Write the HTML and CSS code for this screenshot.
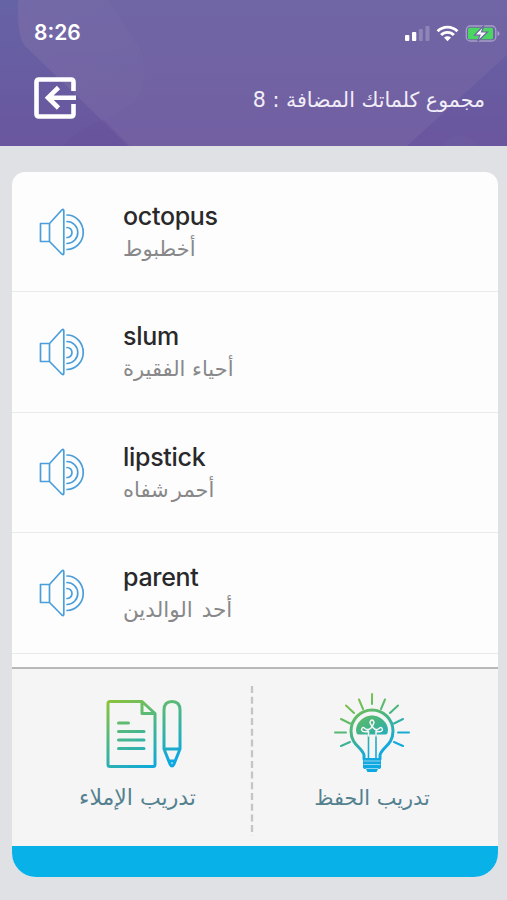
FILE: index.html
```html
<!DOCTYPE html>
<html lang="ar">
<head>
<meta charset="utf-8">
<title>كلماتك المضافة</title>
<link rel="stylesheet" href="styles.css">
</head>
<body>
<svg class="defs" width="0" height="0">
  <symbol id="speaker" viewBox="0 0 46 50">
    <path d="M1.500 16.500H10.500V34.500H1.500ZM10.500 16.500 22.800 3Q24.800 1.500 24.800 4V46Q24.800 48.500 22.800 47L10.500 34.500M28 8A16 17 0 0 1 28 42.500M28 14.500A10.300 10.500 0 0 1 28 36.500M28 20.500A4.700 4.700 0 0 1 28 30.500" fill="none" stroke="#4a9eda" stroke-width="1.700" stroke-linecap="round" stroke-linejoin="round"/>
  </symbol>
</svg>
<main class="screen">
  <header class="header">
    <svg class="backdrop" width="507" height="146" viewBox="0 0 507 146">
      <defs><linearGradient id="lift" x1="0" y1="0" x2="1" y2="1"><stop stop-color="#fff" stop-opacity=".03"/><stop offset="1" stop-color="#fff" stop-opacity=".01"/></linearGradient></defs>
      <path d="M18 0H507V55L407 146H128L24 45Q17 35 18 0Z" fill="#7868a5" opacity=".55"/>
      <path d="M18 0H108L140 49Q152 84 133 103L104 121L24 45Q17 35 18 0Z" fill="url(#lift)"/>
      <path d="M62 146Q78 128 104 120L130 146Z" fill="#63519a" opacity=".35"/>
      <path d="M441 146Q460 124 480 146Z" fill="#7565a5" opacity=".25"/>
    </svg>
    <div class="status">
      <time class="clock">8:26</time>
      <svg class="status-icons" width="96" height="20" viewBox="0 0 96 20">
        <g fill="#fff"><rect x="0" y="12" width="4.300" height="6" rx="1"/><rect x="7" y="9" width="4.300" height="9" rx="1"/><rect x="13.800" y="6" width="4" height="12" rx="1" opacity=".22"/><rect x="20.500" y="3" width="4" height="15" rx="1" opacity=".22"/></g>
        <g fill="none" stroke="#fff" stroke-width="2.900"><path d="M32.600 8.200A14 14 0 0 1 52.400 8.200"/><path d="M36.100 12A9 9 0 0 1 48.900 12"/></g>
        <path d="M39 14.600Q42.500 11.900 46 14.600L42.500 18.200Z" fill="#fff"/>
        <rect x="61.300" y="3" width="29.500" height="15" rx="4" fill="none" stroke="#a5a0c9" stroke-width="1.300"/>
        <path d="M92.500 8V13Q94.500 12.500 94.500 10.500Q94.500 8.500 92.500 8Z" fill="#a5a0c9"/>
        <rect x="63" y="4.700" width="25" height="11.600" rx="1.500" fill="#4bd662"/>
        <path d="M79 2.500 69.500 12.200H75L72.500 18.500 82.500 9H76.500Z" fill="#fff" stroke="#6e65a6" stroke-width="1.200"/>
      </svg>
    </div>
    <div class="title-bar">
      <svg class="exit" width="42" height="42" viewBox="0 0 42 42" fill="none" stroke="#fff" stroke-width="4.600">
        <path d="M39.500 14V5Q39.500 2.500 37 2.500H5Q2.500 2.500 2.500 5V37Q2.500 39.500 5 39.500H37Q39.500 39.500 39.500 37V27"/>
        <path d="M42 20.700H14M24.500 10.500 14 20.700 24.500 31"/>
      </svg>
      <h1 class="title" dir="rtl">مجموع كلماتك المضافة : 8</h1>
    </div>
  </header>
  <section class="card">
    <ul class="words">
      <li class="word"><svg class="speaker"><use href="#speaker"/></svg><div class="entry"><b class="term">octopus</b><span class="meaning" dir="rtl">أخطبوط</span></div></li>
      <li class="word"><svg class="speaker"><use href="#speaker"/></svg><div class="entry"><b class="term">slum</b><span class="meaning" dir="rtl">أحياء الفقيرة</span></div></li>
      <li class="word"><svg class="speaker"><use href="#speaker"/></svg><div class="entry"><b class="term">lipstick</b><span class="meaning tight" dir="rtl">أحمر شفاه</span></div></li>
      <li class="word"><svg class="speaker"><use href="#speaker"/></svg><div class="entry"><b class="term">parent</b><span class="meaning loose" dir="rtl">أحد الوالدين</span></div></li>
    </ul>
    <nav class="training">
      <a class="mode">
        <svg width="78" height="72" viewBox="0 0 78 72" fill="none" stroke="url(#paper)" stroke-width="3" stroke-linecap="round" stroke-linejoin="round">
          <defs><linearGradient id="paper" gradientUnits="userSpaceOnUse" x1="10" y1="0" x2="45" y2="72"><stop stop-color="#8ac33e"/><stop offset=".5" stop-color="#46b68f"/><stop offset="1" stop-color="#0ba8e1"/></linearGradient></defs>
          <path d="M37 2.500H5Q3 2.500 3 4.500V65.500Q3 67.500 5 67.500H48Q50 67.500 50 65.500V14.500ZM37 2.500V14.500H50M13.500 24H23.500M13.500 32.500H39M13.500 41H39M13.500 49.500H39"/>
          <path d="M59 50V11Q59 2.500 67 2.500Q75 2.500 75 11V50L69 65Q67 69 65 65ZM59 50H75M64.500 62H69.500"/>
        </svg>
        <span class="mode-name dictation" dir="rtl">تدريب الإملاء</span>
      </a>
      <svg class="separator" width="4" height="150"><path d="M2 0V150" stroke="#c5c5c5" stroke-width="2.300" stroke-dasharray="7 3.700"/></svg>
      <a class="mode">
        <svg width="76" height="80" viewBox="0 0 76 80" fill="none" stroke="url(#glow)" stroke-width="2" stroke-linecap="round" stroke-linejoin="round">
          <defs><linearGradient id="glow" gradientUnits="userSpaceOnUse" x1="14" y1="4" x2="52" y2="72"><stop stop-color="#8ac33e"/><stop offset=".45" stop-color="#46b583"/><stop offset=".8" stop-color="#13a9df"/><stop offset="1" stop-color="#0ba8e1"/></linearGradient></defs>
          <path d="M38.100 1L38 11M25 6.500 29 16M51 6.500 47 16M12 12.500 20 20M64 12.500 56 20M7 26 16 30.500M69 26 60 30.500M1 39.500H12M64 39.500H75M7 53 16 49M69 53 60 49"/>
          <path stroke-width="3" d="M30 66V62C28 54 17 52 17 38A21 21 0 0 1 59 38C59 52 48 54 46 62V66"/>
          <path fill="url(#glow)" stroke="none" d="M22.500 40C20 31 29 22.500 38 22.500S56 31 53.500 40Q53 41.500 51 41.500H25Q23 41.500 22.500 40Z"/>
          <path d="M34.500 41V65M42 41V65" stroke-width="1.600"/>
          <path stroke="#f5f5f5" stroke-width="1.500" d="M34.500 43V38Q29 40 27.500 37Q28 33 31 35.500Q34 38 37 35Q40 31 40 29Q38 25 36 29Q36 31 39.500 35Q42 38 45 35.500Q48 33 48.500 37Q47 40 42 38V43"/>
          <path fill="url(#glow)" stroke="none" d="M29 65H47V74Q47 76 44 76L42.500 79H33.500L32 76Q29 76 29 74Z"/>
          <path stroke="#b5e0f2" stroke-width=".8" d="M30 68H46M30 71.500H46M32 75.500H44"/>
        </svg>
        <span class="mode-name memorise" dir="rtl">تدريب الحفظ</span>
      </a>
    </nav>
    <div class="base"></div>
  </section>
</main>
</body>
</html>
```
FILE: styles.css
```css
* { box-sizing: border-box; }
body { margin: 0; background: #e0e1e5; font-family: Inter, "DejaVu Sans", sans-serif; }
.defs { position: absolute; }
.screen { width: 507px; height: 900px; overflow: hidden; display: flex; flex-direction: column; }
.header { position: relative; height: 146px; color: #fff; background: linear-gradient(#6663a5, #6a569e); }
.backdrop { position: absolute; inset: 0; }
.status, .title-bar { position: relative; display: flex; justify-content: space-between; align-items: center; }
.status { height: 66px; padding: 0 6px 0 34px; }
.clock { font-size: 21px; font-weight: 600; line-height: 24px; }
.title-bar { height: 63px; padding: 0 22px 0 34px; }
.title { margin: 4px 0 0; font: 400 20.600px/30px "DejaVu Sans", sans-serif; color: #f1eef8; white-space: nowrap; }
.card { width: 486px; height: 705px; margin: 26px 0 0 12px; border-radius: 13px 13px 24px 24px; overflow: hidden; background: #fdfdfd; display: flex; flex-direction: column; }
.words { margin: 0; padding: 0; list-style: none; height: 495px; }
.word { height: 120.400px; border-bottom: 1px solid #e9eaec; display: flex; }
.speaker { width: 46px; height: 50px; margin: 34.500px 0 0 27px; flex: none; }
.entry { display: flex; flex-direction: column; align-items: flex-start; margin: 28px 0 0 38px; }
.term { font-size: 25px; font-weight: 500; line-height: 32px; letter-spacing: -.3px; color: #29292b; }
.meaning { font: 400 21px/34px "DejaVu Sans", sans-serif; color: #88888a; white-space: nowrap; }
.tight { word-spacing: -3.500px; }
.loose { font-size: 21.500px; word-spacing: 2px; }
.training { height: 179px; border-top: 2px solid #b8b8b8; background: #f5f5f5; display: grid; grid-template-columns: 238px 4px 1fr; }
.mode { display: flex; flex-direction: column; align-items: center; justify-content: flex-end; gap: 12px; padding-bottom: 33px; }
.mode:first-child { padding-left: 26px; }
.mode:last-child { padding-right: 8px; gap: 10px; }
.mode-name { font: 400 20.800px/30px "DejaVu Sans", sans-serif; color: #54818f; white-space: nowrap; }
.dictation { font-size: 22px; margin-left: -13px; }
.separator { margin-top: 17px; }
.base { flex: 1; background: #09b1e9; }
```
